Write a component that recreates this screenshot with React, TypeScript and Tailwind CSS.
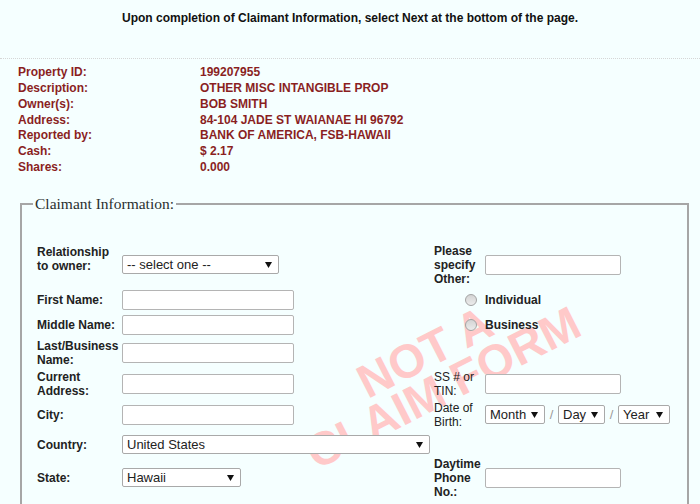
import React from "react";

const Arrow = () => (
  <svg width="7" height="6" viewBox="0 0 7 6" className="shrink-0">
    <polygon points="0,0 7,0 3.5,6" fill="#111" />
  </svg>
);

function FakeSelect({ value, w }: { value: string; w: string }) {
  return (
    <div
      className={`${w} flex h-[19px] items-center justify-between rounded-[2px] border border-[#a9a9a9] bg-white pl-[4px] pr-[6px] text-[13px] leading-none text-[#222]`}
    >
      <span>{value}</span>
      <Arrow />
    </div>
  );
}

function TextBox({ w }: { w: string }) {
  return <div className={`${w} h-[20px] rounded-[2px] border border-[#b4b4b4] bg-white`} />;
}

function Radio() {
  return (
    <span className="mr-[8px] block h-[12px] w-[12px] justify-self-end rounded-full border border-[#a3a3a3] bg-gradient-to-b from-[#d4d4d4] to-[#ececec]" />
  );
}

const property: [string, string][] = [
  ["Property ID:", "199207955"],
  ["Description:", "OTHER MISC INTANGIBLE PROP"],
  ["Owner(s):", "BOB SMITH"],
  ["Address:", "84-104 JADE ST WAIANAE HI 96792"],
  ["Reported by:", "BANK OF AMERICA, FSB-HAWAII"],
  ["Cash:", "$ 2.17"],
  ["Shares:", "0.000"],
];

export default function App() {
  return (
    <div className="relative h-[504px] w-[700px] overflow-hidden bg-[#f5ffff] font-['Liberation_Sans',Arial,sans-serif] text-[12px] text-[#222]">
      <div className="h-[58px] pt-[11px] text-center text-[12px] font-bold leading-[14px] text-[#111]">
        Upon completion of Claimant Information, select Next at the bottom of the page.
      </div>
      <div className="border-t border-dotted border-[#d6d6d6]" />

      <div className="grid grid-cols-[182px_1fr] pl-[18px] pt-[6px] text-[12px] font-bold leading-[15.85px] text-[#8a1f1f]">
        {property.map(([k, v]) => (
          <React.Fragment key={k}>
            <div>{k}</div>
            <div>{v}</div>
          </React.Fragment>
        ))}
      </div>

      <fieldset className="relative ml-[20px] mr-[11px] mt-[19px] border-2 border-[#a6a6a6] pb-[5px]">
        <legend className="ml-[11px] px-[2px] font-['Liberation_Serif','Times_New_Roman',serif] text-[15.5px] leading-[18px] text-[#2a2f2f]">
          Claimant Information:
        </legend>

        <div className="relative z-10 grid grid-cols-[85px_312px_51px_auto] grid-rows-[42px_22px_22px_28px_28px_28px_22px_42px] items-center gap-y-[3px] pl-[15px] pt-[31px] text-[12px] leading-[14px]">
          {/* row 1 */}
          <div className="self-start pt-[1px] font-bold">
            Relationship
            <br />
            to owner:
          </div>
          <FakeSelect value="-- select one --" w="w-[157px]" />
          <div className="font-bold">
            Please
            <br />
            specify
            <br />
            Other:
          </div>
          <TextBox w="w-[136px]" />

          {/* row 2 */}
          <div className="mt-[1px] font-bold">First Name:</div>
          <div className="mt-[1px]">
            <TextBox w="w-[172px]" />
          </div>
          <Radio />
          <div className="mt-[1px] font-bold">Individual</div>

          {/* row 3 */}
          <div className="mt-[1px] font-bold">Middle Name:</div>
          <div className="mt-[1px]">
            <TextBox w="w-[172px]" />
          </div>
          <Radio />
          <div className="mt-[1px] font-bold">Business</div>

          {/* row 4 */}
          <div className="whitespace-nowrap font-bold">
            Last/Business
            <br />
            Name:
          </div>
          <TextBox w="w-[172px]" />
          <div />
          <div />

          {/* row 5 */}
          <div className="font-bold">
            Current
            <br />
            Address:
          </div>
          <TextBox w="w-[172px]" />
          <div>
            SS # or
            <br />
            TIN:
          </div>
          <TextBox w="w-[136px]" />

          {/* row 6 */}
          <div className="font-bold">City:</div>
          <TextBox w="w-[172px]" />
          <div>
            Date of
            <br />
            Birth:
          </div>
          <div className="flex items-center text-[13px] text-[#999]">
            <FakeSelect value="Month" w="w-[60px]" />
            <span className="w-[13px] text-center">/</span>
            <FakeSelect value="Day" w="w-[47px]" />
            <span className="w-[13px] text-center">/</span>
            <FakeSelect value="Year" w="w-[52px]" />
          </div>

          {/* row 7 */}
          <div className="mt-[4px] font-bold">Country:</div>
          <div className="mt-[4px]">
            <FakeSelect value="United States" w="w-[308px]" />
          </div>
          <div />
          <div />

          {/* row 8 */}
          <div className="font-bold">State:</div>
          <FakeSelect value="Hawaii" w="w-[119px]" />
          <div className="font-bold">
            Daytime
            <br />
            Phone
            <br />
            No.:
          </div>
          <TextBox w="w-[136px]" />
        </div>
      </fieldset>

      {/* watermark, sits behind the form fields */}
      <div className="pointer-events-none absolute left-[434px] top-[370px] z-0 -translate-x-1/2 -translate-y-1/2 -rotate-[27deg] whitespace-nowrap text-center text-[47px] font-bold leading-[40px] text-[#ffc9c9]">
        NOT A
        <br />
        CLAIM FORM
      </div>
    </div>
  );
}
